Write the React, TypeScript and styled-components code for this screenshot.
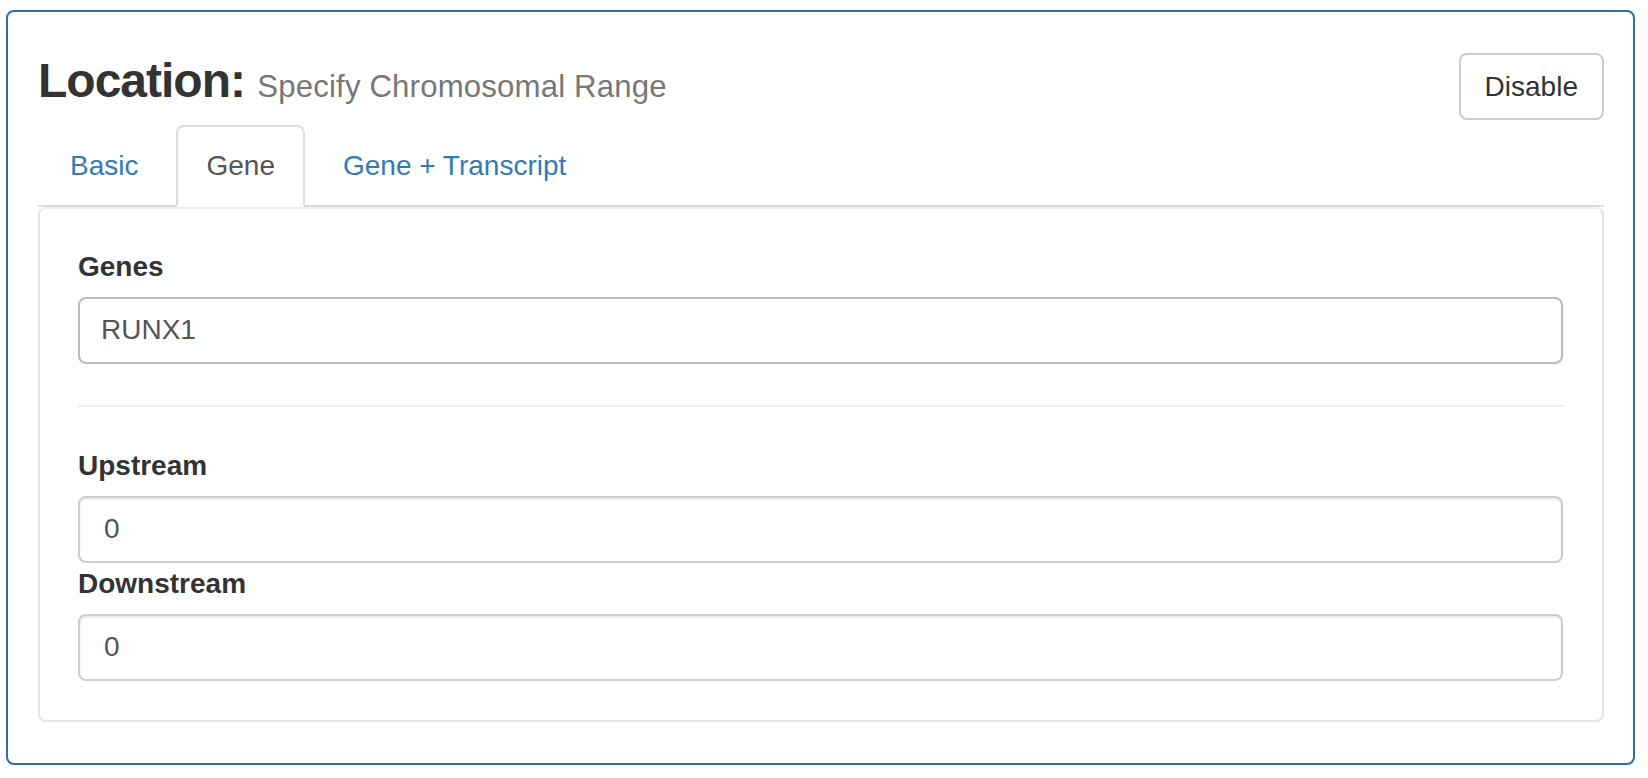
import React, { useState } from "react";
import styled, { createGlobalStyle } from "styled-components";

const GlobalStyle = createGlobalStyle`
  html, body {
    margin: 0;
    padding: 0;
    background: #ffffff;
  }
  body {
    font-family: "Liberation Sans", Arial, Helvetica, sans-serif;
    color: #333333;
  }
  * { box-sizing: border-box; }
`;

const Outer = styled.section`
  margin: 10px 0 0 6px;
  width: 1629px;
  border: 2px solid #2f6fa9;
  border-radius: 8px;
  padding: 0 29px 41px 30px;
  background: #fff;
`;

const HeaderRow = styled.div`
  display: flex;
  justify-content: space-between;
  align-items: flex-start;
  padding-top: 40px;
`;

const Title = styled.h3`
  margin: 2px 0 0 0;
  font-size: 48px;
  line-height: 53px;
  font-weight: 700;
  letter-spacing: -1px;
  color: #333333;
`;

const Subtitle = styled.small`
  font-size: 31.2px;
  font-weight: 400;
  letter-spacing: 0.15px;
  color: #777777;
`;

const Button = styled.button`
  margin-top: 1px;
  height: 67px;
  padding: 0 24px;
  font-family: inherit;
  font-size: 28px;
  color: #333333;
  background: #ffffff;
  border: 2px solid #cccccc;
  border-radius: 8px;
  cursor: pointer;
`;

const TabBar = styled.ul`
  display: flex;
  list-style: none;
  margin: 5px 0 0 0;
  padding: 0 0 0 2px;
  border-bottom: 2px solid #dddddd;
`;

const Tab = styled.li<{ $active?: boolean }>`
  margin: 0 8px -2px 0;
  padding: 19px 28px;
  line-height: 40px;
  font-size: 28px;
  border: 2px solid ${(p) => (p.$active ? "#dddddd" : "transparent")};
  border-bottom-color: ${(p) => (p.$active ? "#ffffff" : "transparent")};
  border-radius: 8px 8px 0 0;
  background: ${(p) => (p.$active ? "#ffffff" : "transparent")};
  color: ${(p) => (p.$active ? "#555555" : "#337ab7")};
  cursor: pointer;
`;

const Panel = styled.div`
  border: 2px solid #e4e4e4;
  border-top-color: #eeeeee;
  border-radius: 8px;
  padding: 38px 39px 39px 38px;
`;

const Label = styled.label`
  display: block;
  font-size: 28px;
  line-height: 40px;
  font-weight: 700;
  color: #333333;
  margin-bottom: 10px;
`;

const Input = styled.input<{ $strong?: boolean }>`
  display: block;
  width: 100%;
  height: 67px;
  padding: 0 24px 2px ${(p) => (p.$strong ? "21px" : "24px")};
  font-family: inherit;
  font-size: 28px;
  color: #555555;
  background: #ffffff;
  border: 2px solid ${(p) => (p.$strong ? "#bbbbbb" : "#cccccc")};
  border-radius: 8px;
  box-shadow: ${(p) => (p.$strong ? "none" : "inset 0 2px 2px rgba(0,0,0,0.075)")};
  outline: none;
`;

const Divider = styled.hr`
  margin: 41px 0 39px 0;
  border: 0;
  border-top: 2px solid #eeeeee;
`;

const Field = styled.div<{ $gap?: number }>`
  margin-bottom: ${(p) => p.$gap ?? 0}px;
`;

export default function App() {
  const [tab, setTab] = useState("Gene");
  const tabs = ["Basic", "Gene", "Gene + Transcript"];
  return (
    <>
      <GlobalStyle />
      <Outer>
        <HeaderRow>
          <Title>
            Location: <Subtitle>Specify Chromosomal Range</Subtitle>
          </Title>
          <Button type="button">Disable</Button>
        </HeaderRow>
        <TabBar>
          {tabs.map((t) => (
            <Tab key={t} $active={t === tab} onClick={() => setTab(t)}>
              {t}
            </Tab>
          ))}
        </TabBar>
        <Panel>
          <Field>
            <Label>Genes</Label>
            <Input $strong defaultValue="RUNX1" />
          </Field>
          <Divider />
          <Field $gap={1}>
            <Label>Upstream</Label>
            <Input defaultValue="0" />
          </Field>
          <Field>
            <Label>Downstream</Label>
            <Input defaultValue="0" />
          </Field>
        </Panel>
      </Outer>
    </>
  );
}
